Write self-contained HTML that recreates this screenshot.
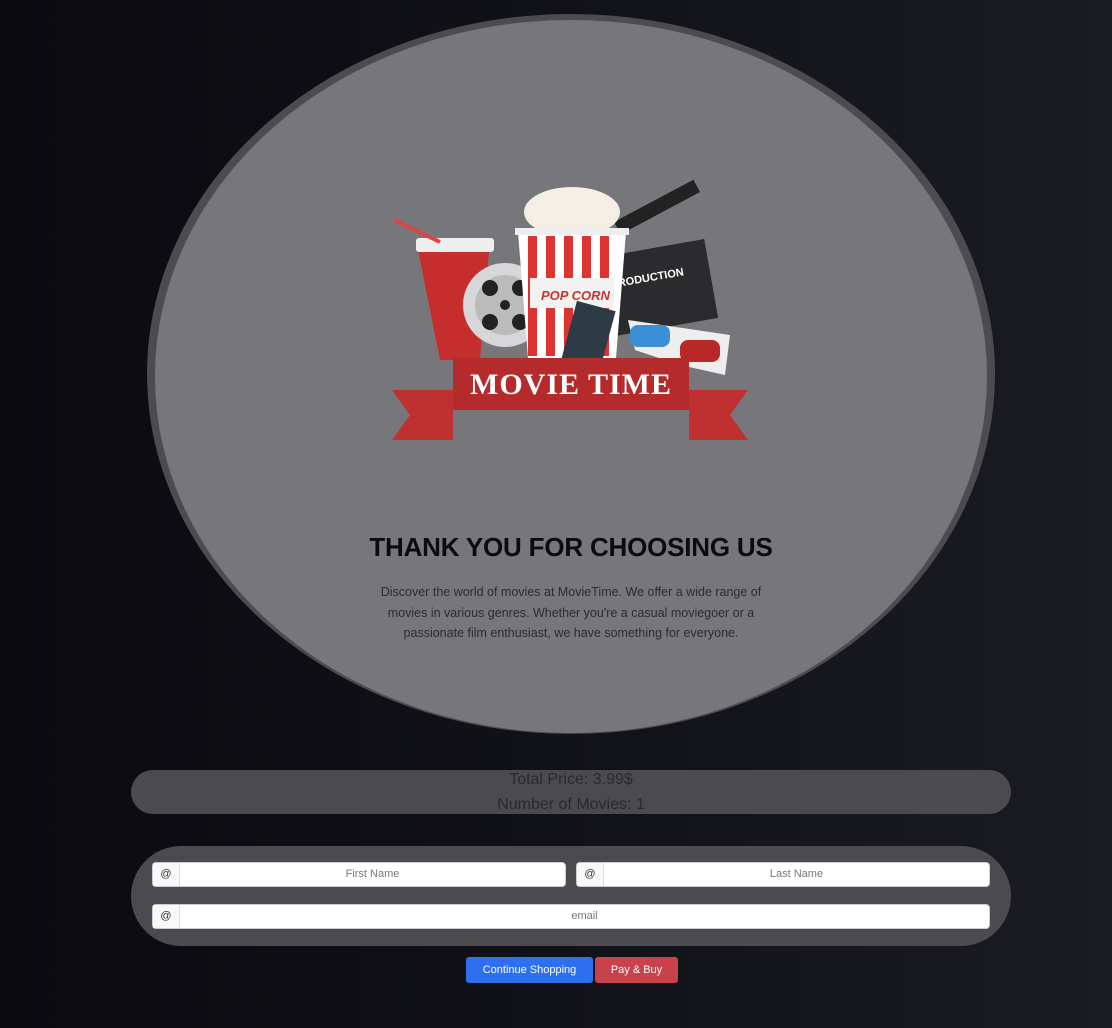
<!DOCTYPE html>
<html><head><style>
body{margin:0;width:1112px;height:1028px;overflow:hidden;background:linear-gradient(90deg,#0a0a0f 0%,#111118 50%,#1b1b23 100%);font-family:"Liberation Sans",sans-serif;position:relative}
.outer{position:absolute;left:147px;top:14px;width:848px;height:720px;border-radius:50%;background:#4b4b50}
.inner{position:absolute;left:155px;top:20px;width:832px;height:713px;border-radius:50%;background:#77777b}
h1{position:absolute;left:0;width:1142px;top:532px;margin:0;text-align:center;font-size:26px;font-weight:bold;color:#0b0b0d;letter-spacing:-0.2px}
p.d{position:absolute;left:366px;width:410px;top:582px;margin:0;text-align:center;font-size:12.5px;line-height:20.5px;color:#2c2c30}
.price{position:absolute;left:131px;top:770px;width:880px;height:44px;border-radius:22px;background:#4a4a4f}
.price div{position:absolute;left:0;right:0;top:-3px;text-align:center;color:#2a2a2e;font-size:16px;line-height:25px}
.form{position:absolute;left:131px;top:846px;width:880px;height:100px;border-radius:50px;background:#4a4a4f}
.ig{position:absolute;height:25px;background:#fff;border:1px solid #ccc;border-radius:4px;box-sizing:border-box;display:flex;font-size:11px;color:#777}
.ig span{width:26px;background:#f7f8fa;border-right:1px solid #ddd;text-align:center;line-height:23px;color:#333}
.ig div{flex:1;text-align:center;line-height:23px}
.btn{position:absolute;top:957px;height:26px;border-radius:3px;color:#fff;font-size:11px;line-height:26px;text-align:center}
</style></head><body>
<div class="outer"></div><div class="inner"></div>
<svg style="position:absolute;left:380px;top:170px" width="380" height="280" viewBox="0 0 380 280">
<rect x="232" y="30" width="90" height="14" fill="#222" transform="rotate(-28 277 37)"/>
<rect x="222" y="78" width="110" height="80" fill="#2b2b2e" transform="rotate(-10 277 118)"/>
<text x="238" y="110" fill="#fff" font-size="11" font-weight="bold" transform="rotate(-10 277 110)">RODUCTION</text>
<polygon points="38,80 110,70 100,190 60,190" fill="#c62e2e"/>
<rect x="36" y="68" width="78" height="14" fill="#eee" rx="3"/>
<line x1="60" y1="72" x2="14" y2="50" stroke="#d44" stroke-width="4"/>
<circle cx="125" cy="135" r="42" fill="#d7d7d9"/>
<circle cx="125" cy="135" r="30" fill="#bbb"/>
<circle cx="110" cy="118" r="8" fill="#222"/><circle cx="110" cy="152" r="8" fill="#222"/><circle cx="140" cy="152" r="8" fill="#222"/><circle cx="140" cy="118" r="8" fill="#222"/><circle cx="125" cy="135" r="5" fill="#222"/>
<ellipse cx="192" cy="42" rx="48" ry="25" fill="#f4eee4"/>
<polygon points="138,62 246,62 236,188 148,188" fill="#fff"/>
<g fill="#d33"><rect x="148" y="66" width="9" height="120"/><rect x="166" y="66" width="9" height="120"/><rect x="184" y="66" width="9" height="120"/><rect x="202" y="66" width="9" height="120"/><rect x="220" y="66" width="9" height="120"/></g>
<rect x="150" y="108" width="84" height="30" fill="#f2f2f2"/>
<text x="161" y="130" fill="#c33" font-size="13" font-weight="bold" font-style="italic">POP CORN</text>
<rect x="135" y="58" width="114" height="7" fill="#eee"/>
<rect x="188" y="135" width="40" height="65" fill="#2d3b47" transform="rotate(15 208 167)"/>
<polygon points="248,150 350,165 345,205 300,195 255,180" fill="#eee"/>
<rect x="250" y="155" width="40" height="22" rx="8" fill="#3a8fd6"/>
<rect x="300" y="170" width="40" height="22" rx="8" fill="#b82828"/>
<rect x="73" y="188" width="236" height="52" fill="#b52a2a"/>
<polygon points="12,220 73,220 73,270 102,270 12,270 30,245" fill="#c13030"/>
<polygon points="368,220 309,220 309,270 280,270 368,270 350,245" fill="#c13030"/>
<text x="191" y="224" text-anchor="middle" fill="#fff" font-family="Liberation Serif,serif" font-size="30" font-weight="bold" letter-spacing="1">MOVIE TIME</text>
</svg>
<h1>THANK YOU FOR CHOOSING US</h1>
<p class="d">Discover the world of movies at MovieTime. We offer a wide range of movies in various genres. Whether you're a casual moviegoer or a passionate film enthusiast, we have something for everyone.</p>
<div class="price"><div>Total Price: 3.99$<br>Number of Movies: 1</div></div>
<div class="form"></div>
<div class="ig" style="left:152px;top:862px;width:414px"><span>@</span><div>First Name</div></div>
<div class="ig" style="left:576px;top:862px;width:414px"><span>@</span><div>Last Name</div></div>
<div class="ig" style="left:152px;top:904px;width:838px"><span>@</span><div>email</div></div>
<div class="btn" style="left:466px;width:127px;background:#2e6ff0">Continue Shopping</div>
<div class="btn" style="left:595px;width:83px;background:#c9414b">Pay &amp; Buy</div>
</body></html>
